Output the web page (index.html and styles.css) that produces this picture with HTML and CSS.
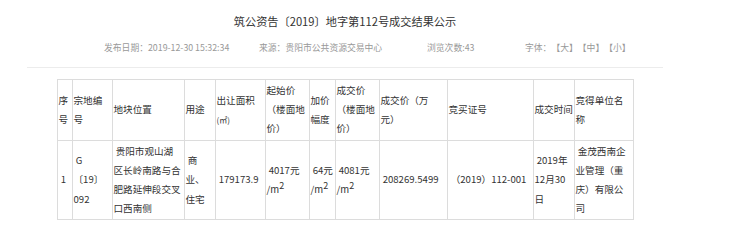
FILE: index.html
```html
<!DOCTYPE html>
<html lang="zh-CN">
<head>
<meta charset="utf-8">
<title>筑公资告〔2019〕地字第112号成交结果公示</title>
<link rel="stylesheet" href="styles.css">
</head>
<body>
<div class="page">
  <h1 class="title">筑公资告〔2019〕地字第112号成交结果公示</h1>
  <div class="meta">
    <span class="m1">发布日期：2019-12-30 15:32:34</span>
    <span class="m2">来源：贵阳市公共资源交易中心</span>
    <span class="m3">浏览次数:43</span>
    <span class="m4">字体：【大】【中】【小】</span>
  </div>
  <table class="result">
    <colgroup>
      <col class="c1"><col class="c2"><col class="c3"><col class="c4"><col class="c5"><col class="c6">
      <col class="c7"><col class="c8"><col class="c9"><col class="c10"><col class="c11"><col class="c12">
    </colgroup>
    <thead>
      <tr>
        <th>序号</th>
        <th>宗地编号</th>
        <th>地块位置</th>
        <th>用途</th>
        <th>出让面积<span class="unit">(㎡)</span></th>
        <th>起始价（楼面地价）</th>
        <th>加价幅度</th>
        <th>成交价（楼面地价）</th>
        <th>成交价（万元）</th>
        <th>竞买证号</th>
        <th class="nw">成交时间</th>
        <th>竞得单位名称</th>
      </tr>
    </thead>
    <tbody>
      <tr>
        <td>&nbsp;1</td>
        <td>&nbsp;G〔19〕092</td>
        <td>&nbsp;贵阳市观山湖区长岭南路与合肥路延伸段交叉口西南侧</td>
        <td>&nbsp;商业、住宅</td>
        <td>&nbsp;179173.9</td>
        <td><span class="nw">&nbsp;4017元</span><wbr>/m<sup>2</sup></td>
        <td><span class="nw">&nbsp;64元</span><wbr>/m<sup>2</sup></td>
        <td><span class="nw">&nbsp;4081元</span><wbr>/m<sup>2</sup></td>
        <td>&nbsp;208269.5499</td>
        <td>&nbsp;（2019）112-001</td>
        <td>&nbsp;2019年12月30日</td>
        <td>&nbsp;金茂西南企业管理（重庆）有限公司</td>
      </tr>
    </tbody>
  </table>
</div>
</body>
</html>
```

FILE: styles.css
```css
html, body {
  margin: 0;
  padding: 0;
  background: #fff;
}
body {
  font-family: "Microsoft YaHei", "Noto Sans CJK SC", "Noto Sans", sans-serif;
  color: #333;
  text-spacing-trim: space-all;
}
.page {
  width: 636px;
  margin-left: 27px;
}
.title {
  margin: 0;
  padding-top: 11px;
  font-size: 11.2px;
  font-weight: normal;
  line-height: 20px;
  text-align: center;
  color: #333;
}
.meta {
  display: flex;
  margin-top: 7px;
  padding-left: 77px;
  padding-bottom: 9px;
  border-bottom: 1px solid #ececec;
  font-size: 8.8px;
  line-height: 20px;
  color: #999;
  white-space: nowrap;
}
.m1 { width: 155px; }
.m2 { width: 168px; }
.m3 { width: 98px; }
.result {
  margin: 11px auto 0;
  width: 576px;
  table-layout: fixed;
  border-collapse: collapse;
  font-size: 9.6px;
  line-height: 19.2px;
  color: #333;
}
.c1 { width: 15px; }
.c2 { width: 40px; }
.c3 { width: 72px; }
.c4 { width: 31px; }
.c5 { width: 50px; }
.c6 { width: 44px; }
.c7 { width: 26px; }
.c8 { width: 44px; }
.c9 { width: 68px; }
.c10 { width: 86px; }
.c11 { width: 41px; }
.c12 { width: 59px; }
.result th,
.result td {
  border: 1px solid #dcdcdc;
  padding: 1px;
  text-align: left;
  vertical-align: middle;
  font-weight: normal;
  overflow: visible;
}
.nw {
  white-space: nowrap;
}
.unit {
  font-size: 8px;
}
.result sup {
  font-size: 9px;
  line-height: 0;
  vertical-align: 4px;
}
```
